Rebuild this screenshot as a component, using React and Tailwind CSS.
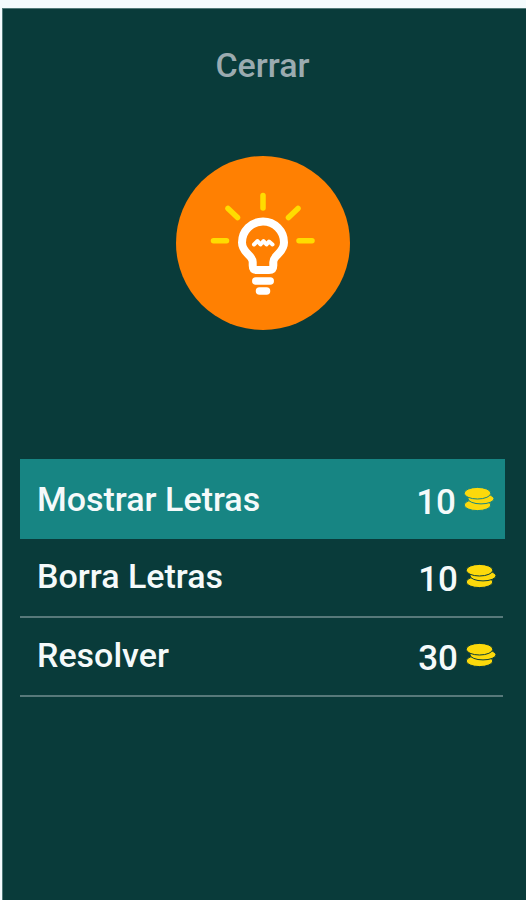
const hints = [
  { label: "Mostrar Letras", cost: 10, row: "h-20 bg-[#178583] text-[#178583]", button: "pt-[18px] pr-[11px]" },
  { label: "Borra Letras", cost: 10, row: "h-[79px] mr-0.5 border-b-2 border-[#57797a] text-[#093b3a]", button: "pt-[15px] pr-[7px]" },
  { label: "Resolver", cost: 30, row: "h-[79px] mr-0.5 border-b-2 border-[#57797a] text-[#093b3a]", button: "pt-[15px] pr-[7px]" },
];

function Coins() {
  return (
    <svg className="h-6 w-[30px] shrink-0" viewBox="0 0 30 24" fill="#fcd90b" stroke="currentColor" strokeWidth="1" aria-hidden="true">
      <ellipse cx="13.5" cy="18" rx="13.3" ry="5.6" />
      <ellipse cx="17" cy="11.7" rx="13" ry="5.2" />
      <ellipse cx="13.5" cy="6.200" rx="13.3" ry="5.800" />
    </svg>
  );
}

function Bulb() {
  return (
    <svg className="h-[176px] w-[176px]" viewBox="0 0 176 176" fill="none" strokeLinecap="round" strokeLinejoin="round" aria-hidden="true">
      <circle cx="88" cy="88" r="87" fill="#ff8002" />
      <g stroke="#ffdc00" strokeWidth="5.500">
        <path d="M88 40.500V53" />
        <path d="M53 53.500L62.500 62.500" />
        <path d="M123 53.500L113.500 62.500" />
        <path d="M38.500 85.700H51.500" />
        <path d="M124 85.700H137" />
      </g>
      <g stroke="#fff">
        <path strokeWidth="8" d="M77.700 107C77.700 100 67 98 67 87.500A21 21 0 0 1 109 87.500C109 98 98.300 100 98.300 107V110.500Q98.300 115 94 115H82Q77.700 115 77.700 110.500Z" />
        <path strokeWidth="4" d="M79 89.500L82.500 86L85.500 89.500L88.500 86L91.500 89.500L94 86.500L97.500 89.500" />
        <path strokeWidth="7.500" d="M80.800 126H95.200" />
        <path strokeWidth="7.500" d="M84.500 136H91.500" />
      </g>
    </svg>
  );
}

export default function App() {
  return (
    <div className="min-h-screen bg-[#f4fbfd] pl-0.5 pt-2 font-['Roboto',sans-serif] font-medium">
      <main className="flex min-h-[calc(100vh-8px)] flex-col items-center border-l border-t border-[#517a79] bg-[#093b3a] pl-[17px] pr-[21px] pt-[34px]">
        <button type="button" className="h-11 text-[34px] leading-[44px] text-[#9babb0]">Cerrar</button>
        <div className="mt-[68px]">
          <Bulb />
        </div>
        <ul className="mt-32 w-full text-[34px] leading-[44px]">
          {hints.map(({ label, cost, row, button }) => (
            <li key={label} className={row}>
              <button type="button" className={`flex h-full w-full items-start justify-between pl-[17px] text-left ${button}`}>
                <span className="text-[#f5fafa]">{label}</span>
                <span className="flex items-start gap-2">
                  <span className="pt-1 text-[35px] text-[#f5fafa]">{cost}</span>
                  <span className="pt-2.5"><Coins /></span>
                </span>
              </button>
            </li>
          ))}
        </ul>
      </main>
    </div>
  );
}
